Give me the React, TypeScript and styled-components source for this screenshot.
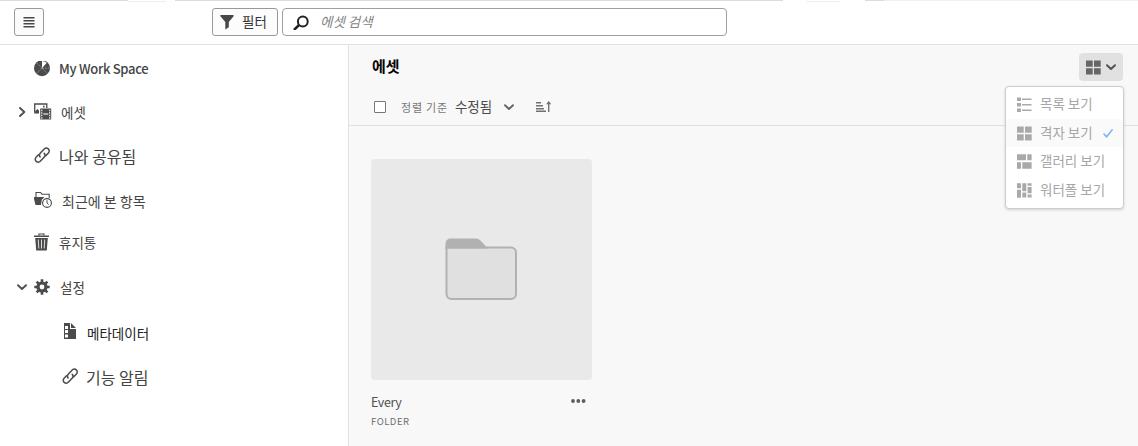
import React from 'react';
import styled, { createGlobalStyle } from 'styled-components';

const GlobalStyle = createGlobalStyle`
  * { box-sizing: border-box; }
  body { margin: 0; background: #fff; }
  button, input { font: inherit; margin: 0; }
  svg { display: block; flex: none; }
`;

const Page = styled.div`
  width: 1138px;
  height: 446px;
  overflow: hidden;
  display: flex;
  flex-direction: column;
  font-family: 'Noto Sans CJK KR', 'Noto Sans', sans-serif;
  color: #4b4b4b;
  background: #fff;
`;

const TopEdge = styled.div`
  display: flex;
  flex: none;
  height: 1px;
`;

const EdgeSegment = styled.span<{ $width: number; $color: string; $soft?: boolean }>`
  width: ${(p) => p.$width}px;
  background: ${(p) => p.$color};
  box-shadow: ${(p) => (p.$soft ? '0 1px 1px #ececec' : 'none')};
`;

const Header = styled.header`
  display: flex;
  flex: none;
  height: 44px;
  padding: 7px 0 0 14px;
  border-bottom: 1px solid #e1e1e1;
`;

const MenuButton = styled.button`
  width: 30px;
  height: 28px;
  margin-right: 168px;
  padding: 0;
  display: grid;
  place-items: center;
  border: 1px solid #999;
  border-radius: 3px;
  background: #fbfbfb;
`;

const FilterButton = styled.button`
  width: 66px;
  height: 28px;
  padding: 0 0 0 7px;
  display: flex;
  align-items: center;
  gap: 8px;
  border: 1px solid #999;
  border-radius: 3px;
  background: #fcfcfc;
`;

const SearchField = styled.label`
  width: 445px;
  height: 28px;
  margin-left: 4px;
  padding-left: 9px;
  display: flex;
  align-items: center;
  gap: 11px;
  border: 1px solid #a0a0a0;
  border-radius: 4px;
`;

const Label = styled.span<{
  $size?: number;
  $color?: string;
  $weight?: number;
  $spacing?: number;
  $italic?: boolean;
  $shift?: number;
}>`
  font-size: ${(p) => p.$size ?? 13.5}px;
  line-height: 20px;
  color: ${(p) => p.$color ?? '#444'};
  font-weight: ${(p) => p.$weight ?? 400};
  letter-spacing: ${(p) => p.$spacing ?? 0}px;
  font-style: ${(p) => (p.$italic ? 'italic' : 'normal')};
  margin-top: ${(p) => p.$shift ?? 0}px;
  white-space: nowrap;
`;

const Body = styled.div`
  display: flex;
  flex: 1;
  min-height: 0;
`;

const Sidebar = styled.nav`
  width: 349px;
  flex: none;
  padding-top: 9px;
  border-right: 1px solid #e1e1e1;
`;

const NavRow = styled.div<{ $after: number; $nested?: boolean }>`
  display: grid;
  grid-template-columns: 18px 16px auto;
  align-items: center;
  height: 30px;
  padding-left: ${(p) => (p.$nested ? 44 : 16)}px;
  margin-bottom: ${(p) => p.$after}px;
`;

const NavText = styled.div<{ $indent: number }>`
  display: flex;
  padding-left: ${(p) => p.$indent}px;
`;

const Main = styled.main`
  flex: 1;
  background: #f8f8f8;
`;

const Toolbar = styled.section`
  display: flex;
  justify-content: space-between;
  height: 81px;
  padding: 8px 15px 0 23px;
  border-bottom: 1px solid #e1e1e1;
`;

const Heading = styled.h1`
  margin: 3px 0 0;
  font-size: 15px;
  line-height: 20px;
  font-weight: 700;
  color: #050505;
`;

const SortBar = styled.div`
  display: flex;
  align-items: center;
  height: 20px;
  margin-top: 21px;
  padding-left: 2px;
`;

const Checkbox = styled.span`
  width: 12px;
  height: 12px;
  margin-right: 15px;
  border: 1.5px solid #777;
  border-radius: 1px;
  background: #fff;
`;

const SortValue = styled.div`
  display: flex;
  align-items: center;
  gap: 11px;
  margin: 0 22px 0 7px;
`;

const ViewPicker = styled.div`
  position: relative;
  height: 28px;
`;

const ViewButton = styled.button`
  width: 44px;
  height: 28px;
  padding: 0 0 0 7px;
  display: flex;
  align-items: center;
  gap: 4px;
  border: 0;
  border-radius: 4px;
  background: #e1e1e1;
`;

const Menu = styled.ul`
  position: absolute;
  top: 33px;
  right: -1px;
  width: 119px;
  height: 123px;
  margin: 0;
  padding: 3px 0;
  list-style: none;
  border: 1px solid #cdcdcd;
  border-radius: 4px;
  background: #fff;
  box-shadow: 0 1px 3px rgba(0, 0, 0, 0.16);
`;

const MenuItem = styled.li<{ $active?: boolean }>`
  display: flex;
  align-items: center;
  height: 28.7px;
  padding-left: 11px;
  gap: 8px;
  background: ${(p) => (p.$active ? '#fafafa' : 'transparent')};
`;

const CheckSlot = styled.span`
  margin-left: 2px;
`;

const Gallery = styled.section`
  padding: 33px 0 0 22px;
`;

const Card = styled.article`
  width: 221px;
`;

const Thumbnail = styled.div`
  height: 221px;
  padding: 79px 0 0 73px;
  border-radius: 4px;
  background: #e9e9e9;
`;

const CardTitle = styled.div`
  display: flex;
  align-items: center;
  justify-content: space-between;
  height: 20px;
  margin-top: 12px;
  padding-right: 6px;
`;

const CardKind = styled.div`
  display: flex;
  height: 20px;
  margin-top: -1px;
`;

const Chevron = ({ right = false, color = '#505050' }: { right?: boolean; color?: string }) => (
  <svg width="11" height="10" viewBox="0 0 11 10" fill="none" stroke={color} strokeWidth="1.9" strokeLinecap="round" strokeLinejoin="round">
    <path d={right ? 'M4 1l4.3 4L4 9' : 'M2 3.2l4 3.8 4-3.8'} />
  </svg>
);

const HamburgerIcon = () => (
  <svg width="12" height="12" viewBox="0 0 12 12" fill="#484848">
    <path d="M.5 1h11v1.5H.5zM.5 4h11v1.5H.5zM.5 7h11v1.5H.5zM.5 10h11v1.5H.5z" />
  </svg>
);

const FunnelIcon = () => (
  <svg width="14" height="16" viewBox="0 0 14 16" fill="#484848">
    <path d="M.4 1h13.2v1.2L8.8 8.1v5.2l-3.5 2.2V8.1L.4 2.2z" />
  </svg>
);

const SearchIcon = () => (
  <svg width="17" height="15" viewBox="0 0 17 15" fill="none" stroke="#222" strokeWidth="2">
    <circle cx="10.8" cy="6.5" r="4.9" />
    <path d="M7 10l-5 5" strokeWidth="2.5" />
  </svg>
);

const PieIcon = () => (
  <svg width="16" height="16" viewBox="0 0 16 16">
    <circle cx="8" cy="7.2" r="8" fill="#4b4b4b" />
    <path d="M8 7.2V0A7.3 7.3 0 0 1 12.8 1.8z" fill="#fff" />
    <path d="M8 7.2l5.6 5.6M8 7.2l-5.6 5.6M8 7.2L2.4 1.6M8 7.2h7.5" stroke="#aaa" strokeWidth=".7" strokeDasharray="2 1" />
  </svg>
);

const MediaIcon = () => (
  <svg width="18" height="18" viewBox="0 0 18 18">
    <path d="M.7 9V1h12.1v4" fill="none" stroke="#4b4b4b" strokeWidth="1.3" />
    <path d="M0 9.8l3.2-3.8L5 7.4V10.5H0zM9 2.8h1.6v1.6H9z" fill="#4b4b4b" />
    <path d="M6.2 5.5h11v11h-11z" fill="#4b4b4b" />
    <path d="M7.8 6.7v9M15.7 6.7v9" stroke="#fff" strokeWidth="1.1" strokeDasharray="1.5 1" />
    <path d="M9.3 11h5" stroke="#fff" strokeWidth="1.1" />
  </svg>
);

const LinkIcon = () => (
  <svg width="17" height="18" viewBox="0 0 17 18" fill="none" stroke="#4b4b4b" strokeWidth="1.5" strokeLinecap="round">
    <path d="M6.1 9.9c-1-1.2-.9-2.6.1-3.7l3.8-4c1.2-1.3 3-1.5 4.3-.3 1.2 1.1 1.3 2.8.1 4.1l-2.6 2.8" />
    <path d="M10.2 6.4c1.2 1.2 1.2 2.6.1 3.7l-3.8 4c-1.2 1.3-3 1.4-4.3.3-1.2-1.2-1.3-2.9-.1-4.1l2.4-2.6" />
  </svg>
);

const RecentIcon = () => (
  <svg width="18" height="20" viewBox="0 0 18 20">
    <path d="M2 6V1.5h4.5L8 3.2h7.2V7" fill="none" stroke="#4b4b4b" strokeWidth="1.1" />
    <path d="M-.5 6h11L7.8 8.8 7 14H1.5z" fill="#4b4b4b" />
    <circle cx="13" cy="12" r="4.4" fill="#fff" stroke="#4b4b4b" strokeWidth="1.1" />
    <path d="M13 9.2V12l1.7 1.5" fill="none" stroke="#4b4b4b" />
  </svg>
);

const TrashIcon = () => (
  <svg width="15" height="18" viewBox="0 0 15 18">
    <path d="M5 2.5V1h5v1.5" fill="none" stroke="#4b4b4b" strokeWidth="1.2" />
    <path d="M0 2.4h15V4H0zM1.2 5h12.6l-1 12.5H2.2z" fill="#4b4b4b" />
    <path d="M4.3 6.5l.5 9M7.5 6.5v9M10.7 6.5l-.5 9" stroke="#ddd" strokeWidth="1" />
  </svg>
);

const GearIcon = () => (
  <svg width="16" height="16" viewBox="0 0 16 16">
    <g stroke="#4b4b4b" strokeWidth="2.6">
      <path d="M8 .3v15.4M.3 8h15.4M2.6 2.6l10.8 10.8M13.4 2.6L2.6 13.4" />
    </g>
    <circle cx="8" cy="8" r="5.6" fill="#4b4b4b" />
    <circle cx="8" cy="8" r="2.4" fill="#fff" />
  </svg>
);

const MetadataIcon = () => (
  <svg width="16" height="20" viewBox="0 0 16 20">
    <path d="M2 0h6v6h6v10H2zM9 0l5 5H9z" fill="#4b4b4b" />
    <path d="M3 3h3v3H3zM3 7h3v3H3zM3 11.5h3v3H3z" fill="#fff" />
  </svg>
);

const SortIcon = () => (
  <svg width="16" height="12" viewBox="0 0 16 12" fill="#707070">
    <path d="M0 1h5v1.5H0zM0 4h7v1.5H0zM0 7h8v1.5H0zM0 9.5h10V11H0zM12 2h1.4v9H12z" />
    <path d="M12.7 0l2.6 3.2h-5.2z" />
  </svg>
);

const GridIcon = ({ color = '#a9a9a9' }: { color?: string }) => (
  <svg width="15" height="15" viewBox="0 0 15 15" fill={color}>
    <path d="M0 .5h6.7v6.3H0zM8 .5h6.7v6.3H8zM0 8.2h6.7v6.3H0zM8 8.2h6.7v6.3H8z" />
  </svg>
);

const ListIcon = () => (
  <svg width="15" height="15" viewBox="0 0 15 15" fill="#a9a9a9">
    <path d="M0 .5h4v3.5H0zM0 6h4v3.5H0zM0 11.5h4V15H0zM5 1.6h9.5v1.5H5zM5 7h9.5v1.5H5zM5 12.5h9.5V14H5z" />
  </svg>
);

const GalleryIcon = () => (
  <svg width="15" height="15" viewBox="0 0 15 15" fill="#a9a9a9">
    <path d="M0 .3h9v6H0zM10.3.3h4.3v6h-4.3zM0 8.3h4v6.4H0zM5.3 8.3h9.3v6.4H5.3z" />
  </svg>
);

const WaterfallIcon = () => (
  <svg width="15" height="15" viewBox="0 0 15 15" fill="#a9a9a9">
    <path d="M0 .3h4v5H0zM0 6.7h4v8H0zM5.3.3h4v8h-4zM5.3 9.6h4v5h-4zM10.6.3h4v2.5h-4zM10.6 4h4v6.2h-4zM10.6 11.6h4v3h-4z" />
  </svg>
);

const CheckIcon = () => (
  <svg width="10" height="9" viewBox="0 0 10 9" fill="none" stroke="#83b7f4" strokeWidth="1.7" strokeLinecap="round" strokeLinejoin="round">
    <path d="M1 5l2.7 2.8L9 1" />
  </svg>
);

const FolderIcon = () => (
  <svg width="73" height="64" viewBox="0 0 73 64">
    <path d="M2.5 9.5h64.5a5 5 0 0 1 5 5v41.5a5 5 0 0 1-5 5H7.5a5 5 0 0 1-5-5z" fill="#e0e0e0" stroke="#b1b1b1" strokeWidth="2" />
    <path d="M1.5 10.5V5.5a5 5 0 0 1 5-5h25.5a6 6 0 0 1 4.2 1.8L43 9.5v1z" fill="#b1b1b1" />
  </svg>
);

const MoreIcon = () => (
  <svg width="15" height="7" viewBox="0 0 15 7" fill="#5d5d5d">
    <circle cx="2" cy="2" r="1.9" />
    <circle cx="7.3" cy="2" r="1.9" />
    <circle cx="12.6" cy="2" r="1.9" />
  </svg>
);

type NavEntry = {
  text: string;
  icon: React.ReactNode;
  indent: number;
  after: number;
  size?: number;
  color?: string;
  weight?: number;
  spacing?: number;
  shift?: number;
  arrow?: 'right' | 'down';
  nested?: boolean;
};

const navEntries: NavEntry[] = [
  { text: 'My Work Space', icon: <PieIcon />, indent: 9, after: 13, size: 13, spacing: -0.3, weight: 450 },
  { text: '에셋', icon: <MediaIcon />, indent: 11, after: 14, arrow: 'right' },
  { text: '나와 공유됨', icon: <LinkIcon />, indent: 9, after: 15, size: 16, shift: -1 },
  { text: '최근에 본 항목', icon: <RecentIcon />, indent: 12, after: 11, size: 14 },
  { text: '휴지통', icon: <TrashIcon />, indent: 9, after: 15, shift: -1 },
  { text: '설정', icon: <GearIcon />, indent: 10, after: 16, shift: -1, arrow: 'down' },
  { text: '메타데이터', icon: <MetadataIcon />, indent: 9, after: 14, nested: true, color: '#222' },
  { text: '기능 알림', icon: <LinkIcon />, indent: 8, after: 0, size: 16, nested: true },
];

const views = [
  { text: '목록 보기', icon: <ListIcon /> },
  { text: '격자 보기', icon: <GridIcon />, active: true },
  { text: '갤러리 보기', icon: <GalleryIcon /> },
  { text: '워터폴 보기', icon: <WaterfallIcon /> },
];

export default function App() {
  return (
    <Page>
      <GlobalStyle />
      <TopEdge>
        <EdgeSegment $width={128} $color="#dcdcdc" />
        <EdgeSegment $width={38} $color="#fff" $soft />
        <EdgeSegment $width={9} $color="#fff" />
        <EdgeSegment $width={608} $color="#dcdcdc" />
        <EdgeSegment $width={23} $color="#fff" />
        <EdgeSegment $width={34} $color="#fff" $soft />
        <EdgeSegment $width={25} $color="#fff" />
        <EdgeSegment $width={19} $color="#dcdcdc" />
        <EdgeSegment $width={254} $color="#f1f1f1" />
      </TopEdge>
      <Header>
        <MenuButton aria-label="메뉴"><HamburgerIcon /></MenuButton>
        <FilterButton>
          <FunnelIcon />
          <Label $color="#333" $shift={-2}>필터</Label>
        </FilterButton>
        <SearchField>
          <SearchIcon />
          <Label $color="#858585" $italic $shift={-2}>에셋 검색</Label>
        </SearchField>
      </Header>
      <Body>
        <Sidebar>
          {navEntries.map((e) => (
            <NavRow key={e.text} $after={e.after} $nested={e.nested}>
              <span>{e.arrow && <Chevron right={e.arrow === 'right'} />}</span>
              {e.icon}
              <NavText $indent={e.indent}>
                <Label $size={e.size} $color={e.color} $weight={e.weight} $spacing={e.spacing} $shift={e.shift}>{e.text}</Label>
              </NavText>
            </NavRow>
          ))}
        </Sidebar>
        <Main>
          <Toolbar>
            <div>
              <Heading>에셋</Heading>
              <SortBar>
                <Checkbox />
                <Label $size={11} $color="#777" $spacing={0.8}>정렬 기준</Label>
                <SortValue>
                  <Label $color="#4b4b4b" $shift={-2}>수정됨</Label>
                  <Chevron color="#666" />
                </SortValue>
                <SortIcon />
              </SortBar>
            </div>
            <ViewPicker>
              <ViewButton aria-label="보기">
                <GridIcon color="#666" />
                <Chevron />
              </ViewButton>
              <Menu>
                {views.map((v) => (
                  <MenuItem key={v.text} $active={v.active}>
                    {v.icon}
                    <Label $color="#a6a6a6" $shift={-3}>{v.text}</Label>
                    {v.active && <CheckSlot><CheckIcon /></CheckSlot>}
                  </MenuItem>
                ))}
              </Menu>
            </ViewPicker>
          </Toolbar>
          <Gallery>
            <Card>
              <Thumbnail><FolderIcon /></Thumbnail>
              <CardTitle>
                <Label $size={12.5} $color="#505050" $spacing={-0.4}>Every</Label>
                <MoreIcon />
              </CardTitle>
              <CardKind>
                <Label $size={9.5} $color="#6e6e6e" $spacing={0.5}>FOLDER</Label>
              </CardKind>
            </Card>
          </Gallery>
        </Main>
      </Body>
    </Page>
  );
}
